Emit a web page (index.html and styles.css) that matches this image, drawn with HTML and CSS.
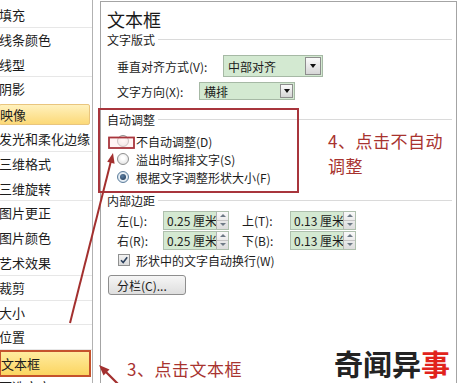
FILE: index.html
```html
<!DOCTYPE html>
<html lang="zh-CN">
<head>
<meta charset="utf-8">
<title>设置形状格式 - 文本框</title>
<link rel="stylesheet" href="styles.css">
</head>
<body>
<div class="screen">
  <ul class="side">
    <li class="sep">填充</li>
    <li>线条颜色</li>
    <li class="sep">线型</li>
    <li>阴影</li>
    <li class="hl">映像</li>
    <li class="sep">发光和柔化边缘</li>
    <li>三维格式</li>
    <li class="sep">三维旋转</li>
    <li>图片更正</li>
    <li>图片颜色</li>
    <li class="sep">艺术效果</li>
    <li class="sep">裁剪</li>
    <li class="sep">大小</li>
    <li class="sep">位置</li>
    <li class="sel">文本框</li>
    <li>可选文字</li>
  </ul>

  <main class="panel">
    <h1 class="title">文本框</h1>
    <div class="group">文字版式</div>
    <div class="row row-valign">
      <span class="lbl lbl-valign">垂直对齐方式(V):</span>
      <div class="select select-valign"><span class="v">中部对齐</span><span class="btn"></span></div>
    </div>
    <div class="row row-dir">
      <span class="lbl lbl-dir">文字方向(X):</span>
      <div class="select select-dir"><span class="v">横排</span><span class="btn"></span></div>
    </div>

    <div class="group group-auto">自动调整</div>
    <div class="opt opt-first"><span class="radio"></span>不自动调整(D)</div>
    <div class="opt"><span class="radio"></span>溢出时缩排文字(S)</div>
    <div class="opt"><span class="radio on"></span>根据文字调整形状大小(F)</div>

    <div class="group group-margin">内部边距</div>
    <div class="mrow mrow-first">
      <span class="mlbl">左(L):</span>
      <div class="spin"><span class="val">0.25 厘米</span><span class="arrows"><i class="up"></i><i class="dn"></i></span></div>
      <span class="mlbl mlbl2">上(T):</span>
      <div class="spin"><span class="val">0.13 厘米</span><span class="arrows"><i class="up"></i><i class="dn"></i></span></div>
    </div>
    <div class="mrow">
      <span class="mlbl">右(R):</span>
      <div class="spin"><span class="val">0.25 厘米</span><span class="arrows"><i class="up"></i><i class="dn"></i></span></div>
      <span class="mlbl mlbl2">下(B):</span>
      <div class="spin"><span class="val">0.13 厘米</span><span class="arrows"><i class="up"></i><i class="dn"></i></span></div>
    </div>
    <div class="check-row">
      <span class="check"><svg viewBox="0 0 10 10" width="10" height="10"><path d="M2 5.2 L4.2 7.5 L8.2 2.3" fill="none" stroke="#2a3f5c" stroke-width="1.6"/></svg></span>形状中的文字自动换行(W)
    </div>
    <div class="btn-cols">分栏(C)...</div>
  </main>

  <svg class="marks" width="457" height="383" viewBox="0 0 457 383">
    <rect x="99" y="109" width="199" height="83" fill="none" stroke="#a8353c" stroke-width="2"/>
    <rect x="109" y="137.5" width="25" height="10.5" fill="rgba(255,235,235,0.55)" stroke="#a8353c" stroke-width="1.8"/>
    <line x1="70" y1="323" x2="111" y2="161" stroke="#a3302f" stroke-width="2"/>
    <polygon points="113,153 114.6,163.8 107.2,161.8" fill="#a3302f"/>
    <line x1="122" y1="388" x2="105" y2="371" stroke="#a3302f" stroke-width="2.2"/>
    <polygon points="99,365 109.5,369.5 103.5,375.5" fill="#a3302f"/>
  </svg>
  <p class="note note4">4、点击不自动<br>调整</p>
  <p class="note note3">3、点击文本框</p>
  <p class="watermark">奇闻异<span class="red">事</span></p>
</div>
</body>
</html>
```
FILE: styles.css
```css
* {
  box-sizing: border-box;
  margin: 0;
  padding: 0;
}

body {
  margin: 0;
  background: #ffffff;
  font-family: "Noto Sans CJK SC", "Noto Sans", sans-serif;
}

.screen {
  position: relative;
  width: 457px;
  height: 383px;
  overflow: hidden;
  display: flex;
  align-items: flex-start;
  background: #ffffff;
  color: #1c1c1c;
}

/* ---------- left category list ---------- */
.side {
  list-style: none;
  width: 93px;
  height: 383px;
  flex: none;
  border-right: 1px solid #b2b2b2;
  padding-top: 3px;
  font-size: 13px;
}

.side li {
  height: 24.8px;
  line-height: 24px;
  margin-left: -1px;
  white-space: nowrap;
}

.side li.sep {
  border-bottom: 1px solid #e7e7e7;
}

.side li.hl {
  height: 20.8px;
  line-height: 19px;
  margin: 2px 2px 2px -1px;
  border: 1px solid #e9c57e;
  border-radius: 2px;
  background: linear-gradient(#fff1bd, #fcd978);
}

.side li.sel {
  height: 27px;
  line-height: 23px;
  margin: 0 1px -2.2px -1px;
  border: 2px solid #c5522c;
  background: linear-gradient(#ffeb9f, #fbd561);
}

/* ---------- main panel ---------- */
.panel {
  flex: 1;
  height: 400px;
  margin-left: 7px;
  margin-top: 1px;
  border: 1px solid #a4a4a4;
  border-bottom: none;
  padding-left: 6px;
  font-size: 12px;
}

.title {
  font-size: 18px;
  font-weight: 400;
  line-height: 22px;
  margin-top: 6px;
  color: #1a1a1a;
}

.group {
  display: flex;
  align-items: center;
  height: 18px;
  font-size: 12px;
}

.group::after {
  content: "";
  flex: 1;
  height: 1px;
  background: #dadada;
  margin: 0 4px 0 3px;
}

.group-auto { margin-top: 10px; }
.group-margin { margin-top: 5px; }

.row {
  display: flex;
  align-items: center;
  padding-left: 10px;
}

.row-valign { margin-top: 7px; height: 22px; }
.row-dir { margin-top: 5px; height: 18px; }

.lbl { white-space: nowrap; }
.lbl-valign { width: 106px; }
.lbl-dir { width: 82px; }

.select {
  display: flex;
  align-items: stretch;
  border: 1px solid #a6b9a5;
  background: #d3e9d1;
}

.select-valign { width: 100px; height: 22px; }
.select-dir { width: 96px; height: 18px; }

.select .v {
  flex: 1;
  padding-left: 4px;
  display: flex;
  align-items: center;
  font-size: 12px;
}

.select .btn {
  width: 16px;
  margin: 1px;
  border: 1px solid #8d8d8d;
  background: linear-gradient(#fbfbfb, #d6d6d6);
  display: flex;
  align-items: center;
  justify-content: center;
}

.select-dir .btn { width: 13px; }

.select .btn::after {
  content: "";
  border-left: 3.5px solid transparent;
  border-right: 3.5px solid transparent;
  border-top: 4px solid #111;
}

/* radios */
.opt {
  display: flex;
  align-items: center;
  height: 18px;
  padding-left: 10px;
  white-space: nowrap;
}

.opt-first { margin-top: 4px; }

.radio {
  width: 12px;
  height: 12px;
  border-radius: 50%;
  border: 1px solid #8f9090;
  background: radial-gradient(circle at 50% 40%, #ffffff 20%, #d9d9d9 100%);
  margin-right: 7px;
  display: flex;
  align-items: center;
  justify-content: center;
}

.radio.on {
  border-color: #5e7e9c;
  background: radial-gradient(circle, #ffffff 30%, #b7cde0 100%);
}

.radio.on::after {
  content: "";
  width: 6px;
  height: 6px;
  border-radius: 50%;
  background: radial-gradient(circle at 40% 35%, #5c7fa3, #1d3552);
}

/* margins */
.mrow {
  display: flex;
  align-items: center;
  height: 20px;
  padding-left: 10px;
}

.mrow-first { margin-top: 1px; }

.mlbl {
  width: 46px;
  white-space: nowrap;
}

.mlbl2 {
  width: 48px;
  margin-left: 13px;
}

.spin {
  display: flex;
  width: 66px;
  height: 19px;
  border: 1px solid #aebfad;
  background: #d4e9d2;
}

.spin .val {
  flex: 1;
  overflow: hidden;
  white-space: nowrap;
  padding-left: 3px;
  line-height: 17px;
  font-size: 12px;
}

.spin .arrows {
  width: 12px;
  display: flex;
  flex-direction: column;
  border-left: 1px solid #b3b3b3;
  background: linear-gradient(#f9f9f9, #dcdcdc);
}

.spin i {
  flex: 1;
  display: flex;
  align-items: center;
  justify-content: center;
}

.spin i.up { border-bottom: 1px solid #c4c4c4; }

.spin i.up::after {
  content: "";
  border-left: 3px solid transparent;
  border-right: 3px solid transparent;
  border-bottom: 3px solid #6e7a86;
}

.spin i.dn::after {
  content: "";
  border-left: 3px solid transparent;
  border-right: 3px solid transparent;
  border-top: 3px solid #6e7a86;
}

.check-row {
  display: flex;
  align-items: center;
  height: 18px;
  margin-top: 1px;
  padding-left: 11px;
  white-space: nowrap;
}

.check {
  width: 12px;
  height: 12px;
  border: 1px solid #8f9090;
  background: linear-gradient(#f2f2f2, #dadada);
  margin-right: 6px;
  display: flex;
  align-items: center;
  justify-content: center;
}

.btn-cols {
  margin-top: 6px;
  margin-left: 1px;
  width: 78px;
  height: 20px;
  border: 1px solid #8e8e8e;
  border-radius: 3px;
  background: linear-gradient(#f6f6f6, #dedede);
  display: flex;
  align-items: center;
  padding-left: 8px;
  font-size: 12px;
  white-space: nowrap;
}

/* ---------- annotation overlays ---------- */
.marks {
  position: absolute;
  left: 0;
  top: 0;
  pointer-events: none;
}

.note {
  position: absolute;
  font-size: 17px;
  line-height: 25px;
  color: #a8332f;
  white-space: nowrap;
}

.note4 { left: 328px; top: 128px; letter-spacing: 0.5px; }
.note3 { left: 127px; top: 356px; letter-spacing: 0.5px; }

.watermark {
  position: absolute;
  left: 334px;
  top: 345px;
  font-size: 29px;
  line-height: 36px;
  font-weight: 700;
  color: #232323;
  white-space: nowrap;
}

.watermark .red { color: #e1231c; }
```
